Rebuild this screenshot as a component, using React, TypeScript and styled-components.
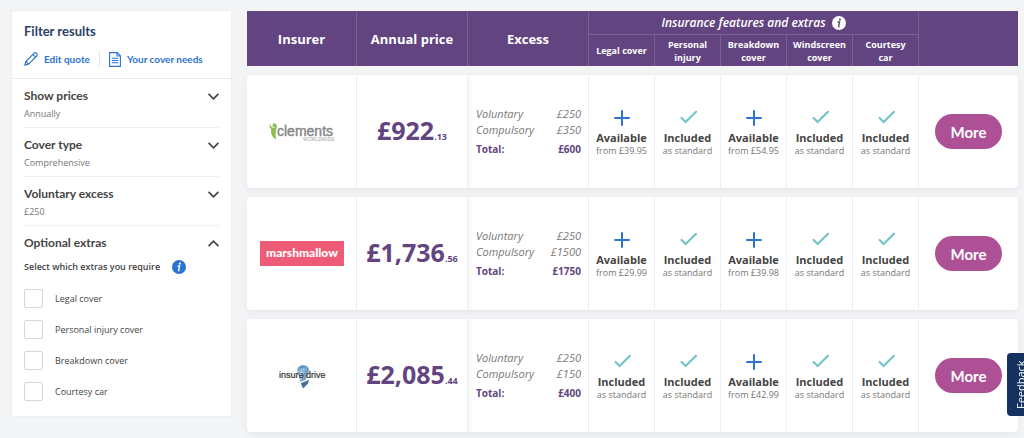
import React, { useState } from "react";
import styled, { createGlobalStyle, css } from "styled-components";

const color = {
  page: "#f3f4f6",
  panel: "#ffffff",
  line: "#eeeff2",
  purple: "#624580",
  purpleLine: "#7b6096",
  navy: "#2b4168",
  blue: "#2b73cf",
  text: "#444444",
  soft: "#777777",
  teal: "#74c3c6",
  pink: "#ae5096",
};

const display = `Lato, "Open Sans", sans-serif`;

const GlobalStyle = createGlobalStyle`
  *, *::before, *::after { box-sizing: border-box; }
  body {
    margin: 0;
    background: ${color.page};
    color: ${color.text};
    font-family: "Open Sans", "Noto Sans", sans-serif;
    font-size: 10px;
  }
  button { font: inherit; color: inherit; border: 0; background: none; padding: 0; cursor: pointer; }
`;

const Page = styled.main`
  display: grid;
  grid-template-columns: 219px minmax(0, 1fr);
  gap: 16px;
  align-items: start;
  padding: 11px 6px 6px 12px;
`;

/* Filter panel */

const Panel = styled.aside`
  background: ${color.panel};
  box-shadow: 0 0 1px 1px ${color.line};
  padding-bottom: 15px;
`;

const PanelHead = styled.header`
  padding: 11px 12px 11px;
  border-bottom: 1px solid #e9ebef;
`;

const PanelTitle = styled.h2`
  margin: 0;
  font: 700 13px/18px ${display};
  color: ${color.navy};
`;

const HeadLinks = styled.nav`
  display: flex;
  align-items: center;
  margin-top: 11px;
`;

const HeadLink = styled.a`
  display: flex;
  align-items: center;
  gap: 6px;
  font: 700 10px/16px ${display};
  color: ${color.blue};
  text-decoration: none;
  white-space: nowrap;

  & + & {
    margin-left: 9px;
    padding-left: 9px;
    border-left: 1px solid #e3e5ea;
  }
`;

const Section = styled.section`
  margin: 0 12px;
  padding: 8px 0 4px;
  border-bottom: 1px solid ${color.line};

  &:last-child {
    border-bottom: 0;
    padding-bottom: 0;
  }
`;

const SectionToggle = styled.button`
  display: flex;
  align-items: center;
  justify-content: space-between;
  width: 100%;
  font: 700 12px/18px ${display};
`;

const SectionValue = styled.p`
  margin: 0;
  font-size: 9px;
  line-height: 18px;
  color: ${color.soft};
`;

const ExtrasHint = styled.p`
  display: flex;
  align-items: center;
  gap: 12px;
  margin: 7px 0 15px;
  font-size: 9px;
  font-weight: 600;
  line-height: 15px;
`;

const Options = styled.div`
  display: grid;
  gap: 12px;
`;

const Option = styled.label`
  display: flex;
  align-items: center;
  gap: 12px;
  font-size: 9px;
  line-height: 19px;
`;

const Tick = styled.input`
  appearance: none;
  width: 19px;
  height: 19px;
  margin: 0;
  border: 1px solid #d5d5e4;
  border-radius: 2px;
  background: #fff;

  &:checked { background: ${color.blue}; }
`;

/* Results table */

const columns = css`
  display: grid;
  grid-template-columns: 110fr 111fr 121fr repeat(5, 66fr) 99fr;
`;

const Results = styled.table`
  display: grid;
  gap: 9px;
`;

const Head = styled.thead`
  ${columns}
  grid-template-rows: 24px 31px;
  background: ${color.purple};
  color: #fff;
`;

const HeadRow = styled.tr`
  display: contents;
`;

const HeadCell = styled.th<{ $kind?: "main" | "group" | "sub" }>`
  display: flex;
  align-items: center;
  justify-content: center;
  min-width: 0;
  padding: 0;
  border-right: 1px solid ${color.purpleLine};
  text-align: center;
  font-weight: 700;

  ${({ $kind = "main" }) =>
    $kind === "main" &&
    css`
      grid-row: 1 / 3;
      font-size: 13px;
    `}
  ${({ $kind }) =>
    $kind === "group" &&
    css`
      grid-column: 4 / 9;
      gap: 6px;
      border-bottom: 1px solid ${color.purpleLine};
      font-size: 12px;
      font-style: italic;
      font-weight: 600;
    `}
  ${({ $kind }) =>
    $kind === "sub" &&
    css`
      grid-row: 2;
      padding: 0 5px;
      font-size: 9px;
      line-height: 13px;
    `}
`;

const BlankHead = styled.td`
  grid-row: 1 / 3;
  grid-column: 9;
`;

const Body = styled.tbody`
  display: grid;
  gap: 9px;
`;

const Row = styled.tr`
  ${columns}
  min-height: 113px;
  border-radius: 4px;
  background: ${color.panel};
  box-shadow: 0 2px 6px rgba(40, 50, 80, 0.07);
`;

const Cell = styled.td`
  display: flex;
  flex-direction: column;
  align-items: center;
  justify-content: center;
  min-width: 0;
  padding: 0;
  border-right: 1px solid ${color.line};

  &:last-child { border-right: 0; }
`;

const TextCell = styled(Cell)`
  padding-top: 4px;
`;

const ExcessCell = styled(Cell)`
  align-items: stretch;
  padding: 0 7px 0 8px;
  box-shadow: inset 5px 0 5px -4px rgba(40, 50, 80, 0.07);
`;

const Price = styled.strong`
  font-size: 25px;
  line-height: 34px;
  color: ${color.purple};

  small { font-size: 9px; }
`;

const ExcessList = styled.dl`
  margin: 0;
`;

const ExcessLine = styled.div<{ $total?: boolean }>`
  display: flex;
  justify-content: space-between;
  font-size: 11px;
  font-style: italic;
  line-height: 16px;
  color: ${color.soft};

  dd { margin: 0; }

  ${({ $total }) =>
    $total &&
    css`
      margin-top: 3px;
      font-size: 10px;
      font-style: normal;
      font-weight: 700;
      color: ${color.purple};
    `}
`;

const Status = styled.strong`
  margin-top: 4px;
  font-size: 11px;
  line-height: 15px;
`;

const StatusNote = styled.span`
  font-size: 9px;
  line-height: 12px;
  color: ${color.soft};
`;

const MoreButton = styled.button`
  width: 67px;
  height: 35px;
  border-radius: 18px;
  background: ${color.pink};
  color: #fff;
  font: 700 15px/20px ${display};
`;

const Feedback = styled.button`
  position: fixed;
  right: -11px;
  bottom: 22px;
  width: 28px;
  height: 63px;
  border-radius: 0 4px 4px 0;
  background: #14315f;
  color: #fff;
  font-size: 11px;
  writing-mode: vertical-rl;
  transform: rotate(180deg);
`;

/* Icons */

const PencilIcon = () => (
  <svg width="14" height="14" viewBox="0 0 14 14" fill="none" stroke={color.blue} strokeWidth="1.100" strokeLinejoin="round" aria-hidden="true">
    <path d="M.7 13.300 1.900 9.500 9.900 1.300C10.700.5 11.800.5 12.600 1.300S13.400 3.200 12.700 4L4.600 12.100Z" />
    <path d="M8.900 2.400 11.600 5.100M1.900 9.500 4.600 12.100" />
  </svg>
);

const DocIcon = () => (
  <svg width="12" height="15" viewBox="0 0 12 15" fill="none" stroke={color.blue} strokeWidth="1.100" aria-hidden="true">
    <path d="M.6.6h7.600l3.200 3.200v10.600H.6ZM8 .8v3.200h3.200" />
    <path d="M2.800 6.200h6.400M2.800 8.500h6.400M2.800 10.800h6.400" />
  </svg>
);

const Chevron = ({ up }: { up?: boolean }) => (
  <svg width="11" height="7" viewBox="0 0 11 7" fill="none" stroke={color.text} strokeWidth="1.700" aria-hidden="true">
    <path d={up ? "M.6 6.200 5.500 1.200l4.900 5" : "M.6.8l4.900 5 4.900-5"} />
  </svg>
);

const InfoIcon = ({ fill, mark }: { fill: string; mark: string }) => (
  <svg width="14" height="14" viewBox="0 0 14 14" aria-hidden="true">
    <circle cx="7" cy="7" r="7" fill={fill} />
    <circle cx="7.900" cy="3.600" r="1.100" fill={mark} />
    <path d="M5.600 6h2l-1 4.200c-.1.500.2.600 1 .3" fill="none" stroke={mark} strokeWidth="1.400" />
  </svg>
);

const PlusIcon = () => (
  <svg width="16" height="16" viewBox="0 0 16 16" stroke={color.blue} strokeWidth="2" strokeLinecap="round" aria-hidden="true">
    <path d="M8 1v14M1 8h14" />
  </svg>
);

const CheckIcon = () => (
  <svg width="18" height="16" viewBox="0 0 18 16" fill="none" stroke={color.teal} strokeWidth="2.200" strokeLinecap="round" aria-hidden="true">
    <path d="M2.600 8 6.600 12 17 1.800" />
  </svg>
);

/* Insurer logos */

const ClementsLogo = () => (
  <svg width="66" height="22" viewBox="0 0 66 22" role="img" aria-label="Clements Worldwide">
    <circle cx="5.500" cy="4.200" r="2" fill="#8cc152" />
    <path d="M.6 2.500C.3 5 .8 6.800 2.200 8.200 1.600 12 2.600 16 7.400 18.600 6.300 15 6.600 12 7.200 8.600 8 7.600 8.100 5.500 7.800 4 7.300 6 6.200 6.700 4.600 6.800 2.800 6.600 1.600 5 .6 2.500Z" fill="#8cc152" />
    <text x="8" y="15" fontFamily="Liberation Sans, sans-serif" fontSize="14" fill="#858585" stroke="#858585" strokeWidth="0.400">clements</text>
    <text x="34" y="20" fontFamily="Liberation Sans, sans-serif" fontSize="5" fill="#a5a5a5">WORLDWIDE</text>
  </svg>
);

const MarshmallowLogo = () => (
  <svg width="84" height="25" viewBox="0 0 84 25" role="img" aria-label="Marshmallow">
    <rect width="84" height="25" fill="#ee5b76" />
    <text x="42" y="16" textAnchor="middle" fontFamily="Lato, sans-serif" fontWeight="900" fontSize="12" fill="#fff">marshmallow</text>
  </svg>
);

const InsureDriveLogo = () => (
  <svg width="48" height="26" viewBox="0 0 48 26" role="img" aria-label="Insure drive">
    <path d="M19 7.500C19.500 3.500 23 1.500 27 2.200 31.500 3 32.500 7.500 30.600 11 29.200 13.500 28 14.300 28 16.800L22.500 19C20.500 15.500 22 12.500 23.500 10.500 24.500 9 24 8 22.500 9.500L19.500 12Z" fill="#8fbcdb" />
    <path d="M20.500 7.500C22 4 26 3.500 27.500 5.500 29 8 25.500 11 24.500 17.500M19.800 5.800C22 2.600 27.500 2 29.400 5.500 30.500 9 27 11.500 26.500 16.500" fill="none" stroke="#4d7ba6" strokeWidth="0.800" />
    <path d="M22.800 20.200 31 16.800 30 20.500 25 25.400Z" fill="#4a6f9c" />
    <text x="1" y="15" fontFamily="Liberation Sans, sans-serif" fontSize="9" fill="#333" stroke="#333" strokeWidth="0.200">insure</text>
    <text x="28" y="15" fontFamily="Liberation Sans, sans-serif" fontSize="9" fill="#333" stroke="#333" strokeWidth="0.200">drive</text>
  </svg>
);

/* Data */

type Extra = string | null; // price when optional, null when included

interface Quote {
  name: string;
  logo: React.ReactNode;
  pounds: string;
  pence: string;
  voluntary: string;
  compulsory: string;
  total: string;
  extras: Extra[];
}

const quotes: Quote[] = [
  { name: "clements", logo: <ClementsLogo />, pounds: "£922", pence: ".13", voluntary: "£250", compulsory: "£350", total: "£600", extras: ["£39.95", null, "£54.95", null, null] },
  { name: "marshmallow", logo: <MarshmallowLogo />, pounds: "£1,736", pence: ".56", voluntary: "£250", compulsory: "£1500", total: "£1750", extras: ["£29.99", null, "£39.98", null, null] },
  { name: "insure-drive", logo: <InsureDriveLogo />, pounds: "£2,085", pence: ".44", voluntary: "£250", compulsory: "£150", total: "£400", extras: [null, null, "£42.99", null, null] },
];

const filters = [
  { title: "Show prices", value: "Annually" },
  { title: "Cover type", value: "Comprehensive" },
  { title: "Voluntary excess", value: "£250" },
];

const options = ["Legal cover", "Personal injury cover", "Breakdown cover", "Courtesy car"];
const features = ["Legal cover", "Personal injury", "Breakdown cover", "Windscreen cover", "Courtesy car"];

const FilterPanel = () => {
  const [open, setOpen] = useState(true);
  return (
    <Panel>
      <PanelHead>
        <PanelTitle>Filter results</PanelTitle>
        <HeadLinks>
          <HeadLink href="#edit"><PencilIcon />Edit quote</HeadLink>
          <HeadLink href="#needs"><DocIcon />Your cover needs</HeadLink>
        </HeadLinks>
      </PanelHead>
      {filters.map((f) => (
        <Section key={f.title}>
          <SectionToggle type="button" aria-expanded={false}>{f.title}<Chevron /></SectionToggle>
          <SectionValue>{f.value}</SectionValue>
        </Section>
      ))}
      <Section>
        <SectionToggle type="button" aria-expanded={open} onClick={() => setOpen(!open)}>
          Optional extras<Chevron up={open} />
        </SectionToggle>
        {open && (
          <>
            <ExtrasHint>Select which extras you require<InfoIcon fill={color.blue} mark="#fff" /></ExtrasHint>
            <Options>
              {options.map((o) => (
                <Option key={o}><Tick type="checkbox" />{o}</Option>
              ))}
            </Options>
          </>
        )}
      </Section>
    </Panel>
  );
};

const ExtraCell = ({ price }: { price: Extra }) => (
  <TextCell>
    {price ? <PlusIcon /> : <CheckIcon />}
    <Status>{price ? "Available" : "Included"}</Status>
    <StatusNote>{price ? `from ${price}` : "as standard"}</StatusNote>
  </TextCell>
);

const QuoteRow = ({ quote }: { quote: Quote }) => (
  <Row>
    <Cell>{quote.logo}</Cell>
    <TextCell><Price>{quote.pounds}<small>{quote.pence}</small></Price></TextCell>
    <ExcessCell>
      <ExcessList>
        <ExcessLine><dt>Voluntary</dt><dd>{quote.voluntary}</dd></ExcessLine>
        <ExcessLine><dt>Compulsory</dt><dd>{quote.compulsory}</dd></ExcessLine>
        <ExcessLine $total><dt>Total:</dt><dd>{quote.total}</dd></ExcessLine>
      </ExcessList>
    </ExcessCell>
    {quote.extras.map((price, i) => <ExtraCell key={features[i]} price={price} />)}
    <Cell><MoreButton type="button">More</MoreButton></Cell>
  </Row>
);

export default function App() {
  return (
    <>
      <GlobalStyle />
      <Page>
        <FilterPanel />
        <Results>
          <Head>
            <HeadRow>
              <HeadCell scope="col" rowSpan={2}>Insurer</HeadCell>
              <HeadCell scope="col" rowSpan={2}>Annual price</HeadCell>
              <HeadCell scope="col" rowSpan={2}>Excess</HeadCell>
              <HeadCell $kind="group" scope="colgroup" colSpan={5}>
                Insurance features and extras<InfoIcon fill="#fff" mark={color.purple} />
              </HeadCell>
              <BlankHead rowSpan={2} />
            </HeadRow>
            <HeadRow>
              {features.map((f) => <HeadCell key={f} $kind="sub" scope="col">{f}</HeadCell>)}
            </HeadRow>
          </Head>
          <Body>
            {quotes.map((q) => <QuoteRow key={q.name} quote={q} />)}
          </Body>
        </Results>
      </Page>
      <Feedback type="button">Feedback</Feedback>
    </>
  );
}
